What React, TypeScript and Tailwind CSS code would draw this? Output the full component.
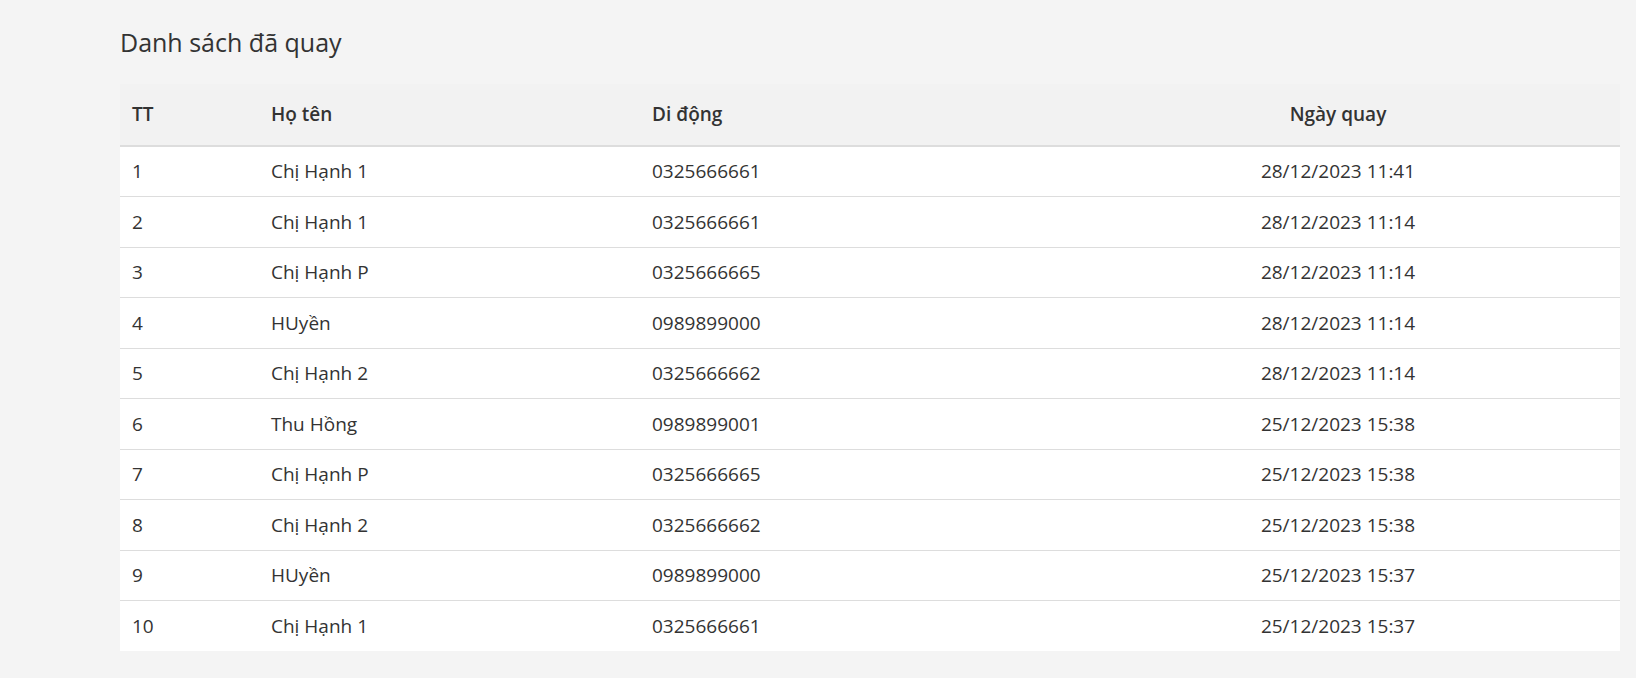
const rows = [
  { tt: 1, name: 'Chị Hạnh 1', phone: '0325666661', date: '28/12/2023 11:41' },
  { tt: 2, name: 'Chị Hạnh 1', phone: '0325666661', date: '28/12/2023 11:14' },
  { tt: 3, name: 'Chị Hạnh P', phone: '0325666665', date: '28/12/2023 11:14' },
  { tt: 4, name: 'HUyền', phone: '0989899000', date: '28/12/2023 11:14' },
  { tt: 5, name: 'Chị Hạnh 2', phone: '0325666662', date: '28/12/2023 11:14' },
  { tt: 6, name: 'Thu Hồng', phone: '0989899001', date: '25/12/2023 15:38' },
  { tt: 7, name: 'Chị Hạnh P', phone: '0325666665', date: '25/12/2023 15:38' },
  { tt: 8, name: 'Chị Hạnh 2', phone: '0325666662', date: '25/12/2023 15:38' },
  { tt: 9, name: 'HUyền', phone: '0989899000', date: '25/12/2023 15:37' },
  { tt: 10, name: 'Chị Hạnh 1', phone: '0325666661', date: '25/12/2023 15:37' }
]

export default function App() {
  return (
    <div className="min-h-[678px] bg-[#f4f4f4] pl-[120px] pr-[16px] pt-[28px] font-['Open_Sans',sans-serif] text-[#333]">
      <h2 className="mb-[27px] text-[25px] leading-[29px] font-normal">Danh sách đã quay</h2>

      <table className="w-[1500px] table-fixed border-collapse bg-white text-[19px]">
        <thead>
          <tr className="h-[62px] bg-[#f2f2f2] border-b-2 border-[#dddddd]">
            <th className="w-[139px] px-[12px] text-left font-semibold">TT</th>
            <th className="w-[381px] px-[12px] text-left font-semibold">Họ tên</th>
            <th className="w-[416px] px-[12px] text-left font-semibold">Di động</th>
            <th className="w-[564px] px-[12px] text-center font-semibold">Ngày quay</th>
          </tr>
        </thead>
        <tbody>
          {rows.map((r, i) => (
            <tr
              key={r.tt}
              className={i < rows.length - 1 ? 'h-[50.5px] border-b border-[#dddddd]' : 'h-[50.5px]'}
            >
              <td className="px-[12px]">{r.tt}</td>
              <td className="px-[12px]">{r.name}</td>
              <td className="px-[12px]">{r.phone}</td>
              <td className="px-[12px] text-center">{r.date}</td>
            </tr>
          ))}
        </tbody>
      </table>
    </div>
  )
}
